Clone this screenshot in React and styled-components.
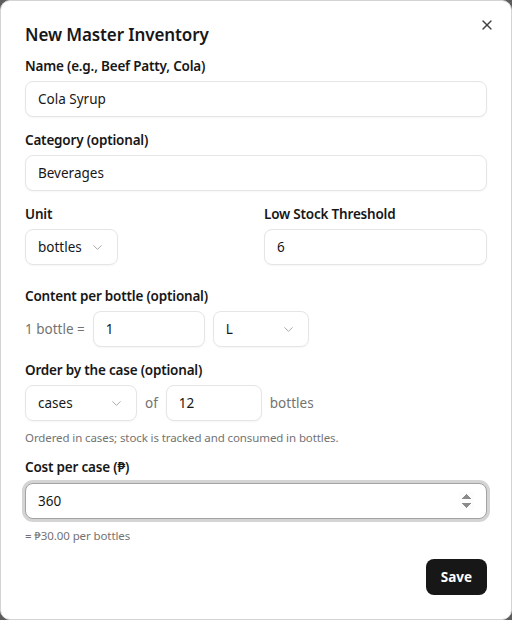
import React from "react";
import styled, { createGlobalStyle } from "styled-components";
import { ChevronDown, X } from "lucide-react";

const GlobalStyle = createGlobalStyle`
    html, body {
        margin: 0;
        padding: 0;
        background: #5c5c5c;
        font-family: "Noto Sans", "Open Sans", sans-serif;
        color: #171717;
    }
    * { box-sizing: border-box; }
`;

const Dialog = styled.div`
    position: relative;
    width: 512px;
    height: 620px;
    background: #fff;
    border: 1px solid #d4d4d4;
    border-radius: 10px;
    padding: 21px 24px 24px 24px;
    display: flex;
    flex-direction: column;
`;

const Close = styled.button`
    position: absolute;
    top: 14px;
    right: 14px;
    width: 20px;
    height: 20px;
    padding: 0;
    border: 0;
    background: none;
    color: #404040;
    display: flex;
    align-items: center;
    justify-content: center;
`;

const Title = styled.h2`
    margin: 0 0 8px 0;
    font-size: 17px;
    line-height: 26px;
    font-weight: 600;
    letter-spacing: -0.1px;
`;

const Field = styled.div`
    display: flex;
    flex-direction: column;
    gap: ${(p) => p.$gap ?? 5}px;
    margin-bottom: ${(p) => p.$mb ?? 13}px;
`;

const Label = styled.label`
    font-size: 13.5px;
    line-height: 20px;
    font-weight: 600;
    letter-spacing: -0.2px;
`;

const Input = styled.input`
    width: ${(p) => p.$w || "100%"};
    height: 36px;
    border: 1px solid #e5e5e5;
    border-radius: 8px;
    padding: 0 12px;
    font: inherit;
    font-size: 13.5px;
    color: #171717;
    background: #fff;
    box-shadow: 0 1px 2px rgba(0, 0, 0, 0.04);
    outline: none;
    &:focus {
        border-color: #a3a3a3;
        box-shadow: 0 0 0 3px #d4d4d4;
    }
    &::-webkit-inner-spin-button {
        opacity: 1;
    }
`;

const Select = styled.div`
    width: ${(p) => p.$w}px;
    height: 36px;
    border: 1px solid #e5e5e5;
    border-radius: 8px;
    padding: 0 12px;
    font-size: 13.5px;
    display: flex;
    align-items: center;
    justify-content: space-between;
    box-shadow: 0 1px 2px rgba(0, 0, 0, 0.04);
    flex-shrink: 0;
    svg {
        color: #a3a3a3;
    }
`;

const Grid = styled.div`
    display: grid;
    grid-template-columns: 1fr 1fr;
    gap: 16px;
    margin-bottom: 21px;
`;

const Row = styled.div`
    display: flex;
    align-items: center;
    gap: 8px;
`;

const Muted = styled.span`
    color: #737373;
    font-size: 13.5px;
`;

const Hint = styled.p`
    margin: ${(p) => p.$m};
    font-size: 11.5px;
    line-height: 16px;
    color: #737373;
    letter-spacing: -0.1px;
`;

const Footer = styled.div`
    display: flex;
    justify-content: flex-end;
`;

const SaveButton = styled.button`
    height: 36px;
    padding: 0 15px;
    border: 0;
    border-radius: 8px;
    background: #171717;
    color: #fff;
    font: inherit;
    font-size: 13.5px;
    font-weight: 700;
`;

export default function App() {
    return (
        <>
            <GlobalStyle />
            <Dialog>
                <Close aria-label="Close">
                    <X size={16} strokeWidth={2} />
                </Close>
                <Title>New Master Inventory</Title>
                <Field>
                    <Label>Name (e.g., Beef Patty, Cola)</Label>
                    <Input defaultValue="Cola Syrup" />
                </Field>
                <Field>
                    <Label>Category (optional)</Label>
                    <Input defaultValue="Beverages" />
                </Field>
                <Grid>
                    <Field $mb={0}>
                        <Label>Unit</Label>
                        <Select $w={93}>
                            bottles <ChevronDown size={15} strokeWidth={1.5} />
                        </Select>
                    </Field>
                    <Field $mb={0}>
                        <Label>Low Stock Threshold</Label>
                        <Input defaultValue="6" />
                    </Field>
                </Grid>
                <Field>
                    <Label>Content per bottle (optional)</Label>
                    <Row>
                        <Muted>1 bottle =</Muted>
                        <Input $w="112px" defaultValue="1" />
                        <Select $w={96}>
                            L <ChevronDown size={15} strokeWidth={1.5} />
                        </Select>
                    </Row>
                </Field>
                <Field $mb={0}>
                    <Label>Order by the case (optional)</Label>
                    <Row>
                        <Select $w={112}>
                            cases <ChevronDown size={15} strokeWidth={1.5} />
                        </Select>
                        <Muted>of</Muted>
                        <Input $w="96px" defaultValue="12" />
                        <Muted>bottles</Muted>
                    </Row>
                </Field>
                <Hint $m="9px 0 11px 0">
                    Ordered in cases; stock is tracked and consumed in bottles.
                </Hint>
                <Field $mb={0} $gap={6}>
                    <Label>Cost per case (₱)</Label>
                    <Input type="number" defaultValue="360" autoFocus />
                </Field>
                <Hint $m="9px 0 15px 0">= ₱30.00 per bottles</Hint>
                <Footer>
                    <SaveButton>Save</SaveButton>
                </Footer>
            </Dialog>
        </>
    );
}
